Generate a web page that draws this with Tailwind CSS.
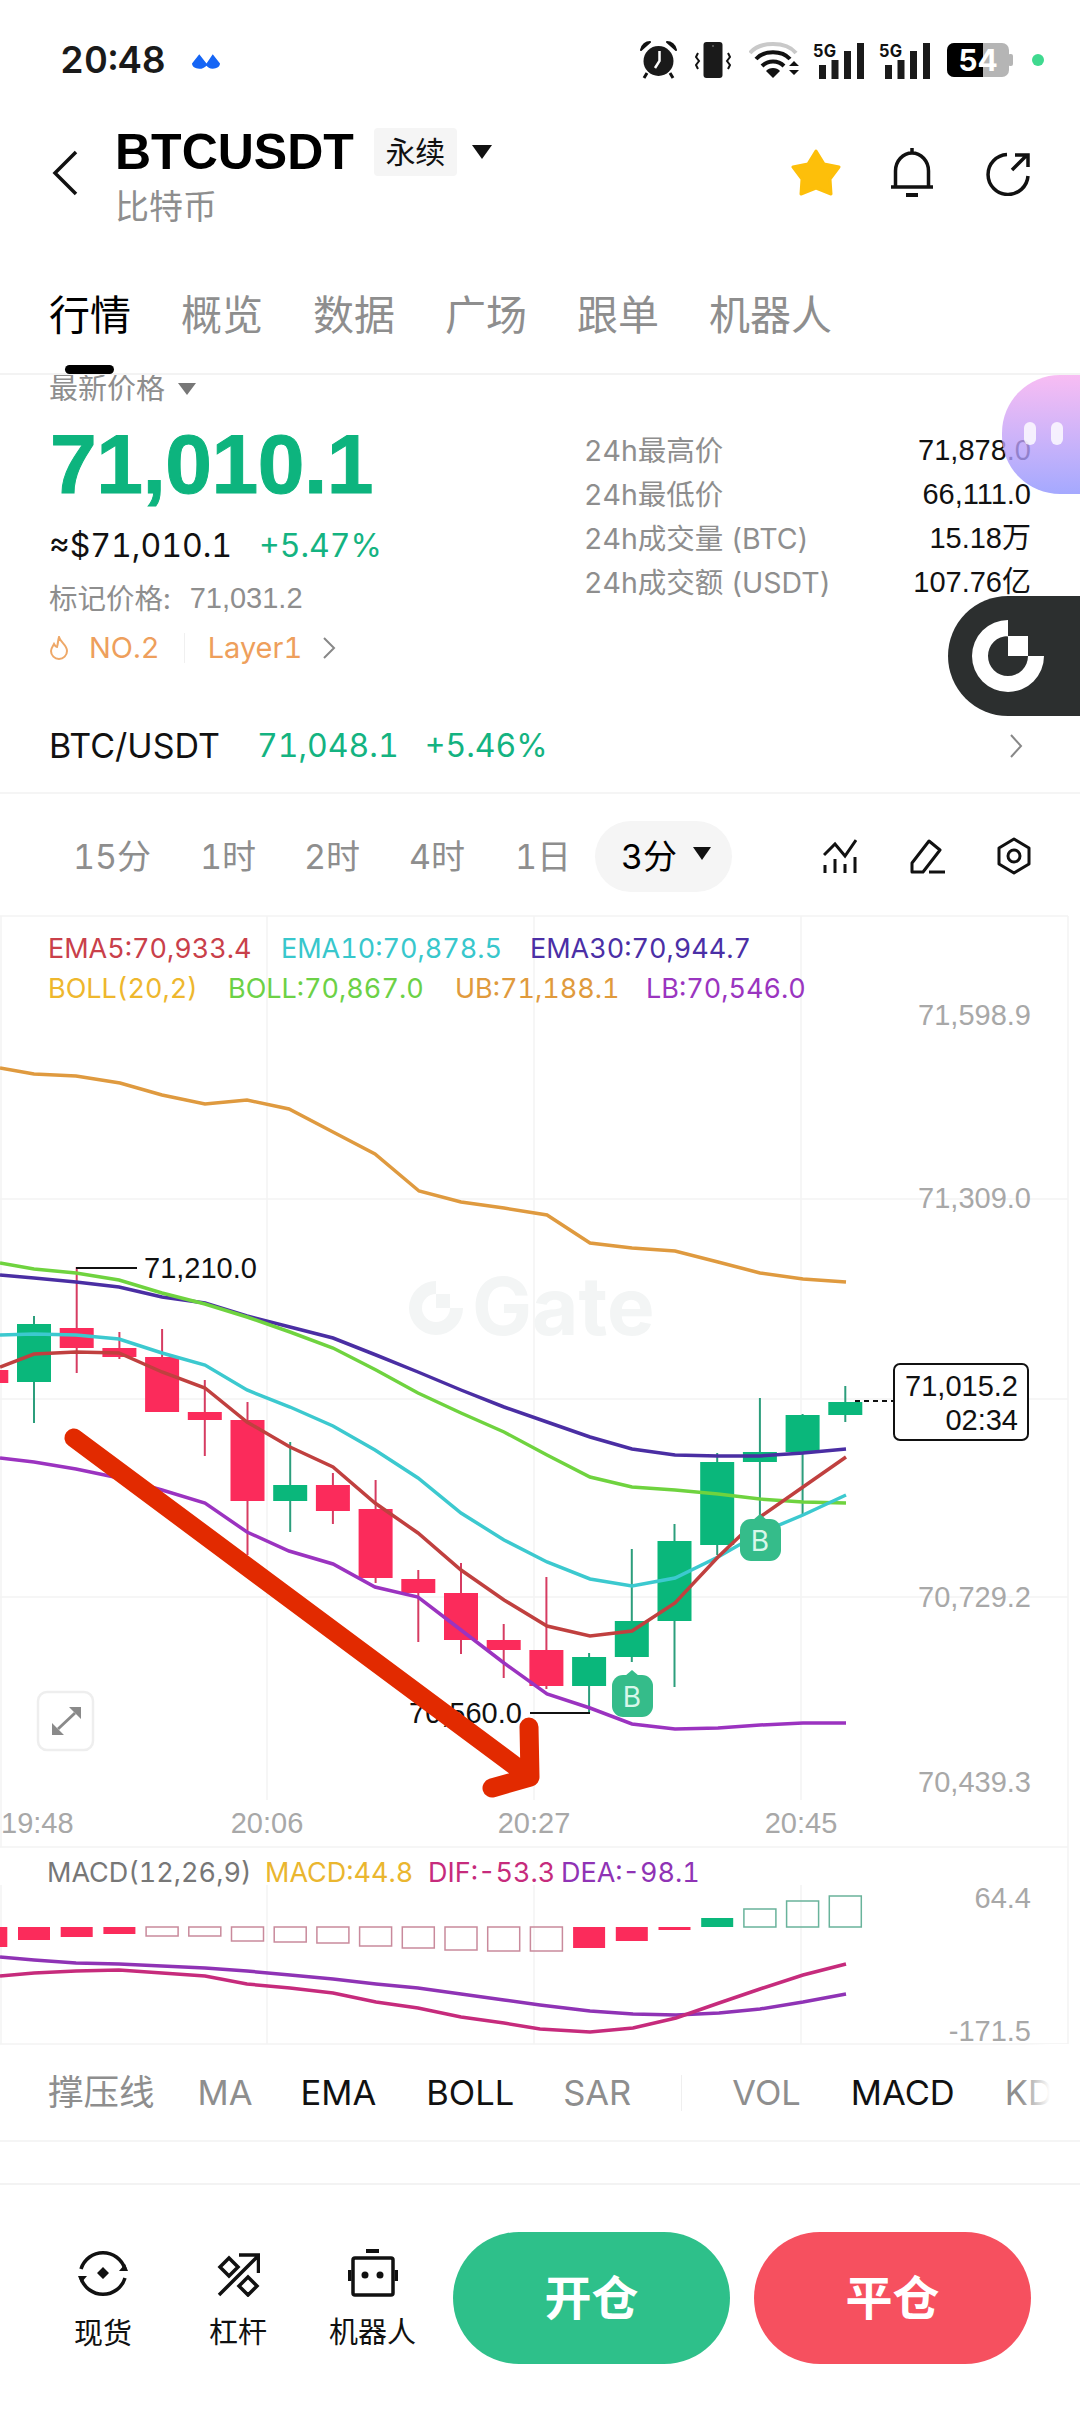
<!DOCTYPE html>
<html lang="zh-CN">
<head>
    <meta charset="UTF-8" />
    <meta name="viewport" content="width=device-width, initial-scale=1.0" />
    <title>BTCUSDT</title>
    <script src="https://cdn.jsdelivr.net/npm/@tailwindcss/browser@4"></script>
</head>
<body>
<div class="relative w-[1080px] h-[2412px] overflow-hidden bg-white text-[#111] tabular-nums [font-family:Inter,'Noto_Sans_CJK_SC',sans-serif]">

    <!-- Status bar -->
    <div class="relative h-[120px] flex items-center pl-[60px] pr-[36px]">
        <span class="text-[37px] font-semibold text-[#1a1a1a]">20:48</span>
        <svg class="ml-[26px] mt-[3px]" width="28" height="15" viewBox="0 0 27 14"><path d="M7 0 L14 9 L20 0 L27 9 C27 12 24 14 20 14 C17 14 15 12 14 11 C12 13 10 14 7 14 C3 14 0 12 0 9 Z" fill="#1565f5"/></svg>
        <div class="ml-auto flex items-center">
            <!-- alarm -->
            <svg width="37" height="38" viewBox="0 0 37 38"><path d="M1 9 C2 4 6 1 10 1 Z M36 9 C35 4 31 1 27 1 Z" fill="#111" stroke="#111" stroke-width="2" stroke-linejoin="round"/><circle cx="18.5" cy="20" r="15" fill="#1a1a1a"/><path d="M19.5 10 V20 L15 27" fill="none" stroke="#fff" stroke-width="2.5"/><path d="M7 32 L4 37 M30 32 L33 37" stroke="#111" stroke-width="3"/></svg>
            <!-- vibrate -->
            <svg class="ml-[18px]" width="36" height="36" viewBox="0 0 36 36"><rect x="8.5" y="0" width="19" height="36" rx="3" fill="#1a1a1a"/><circle cx="18" cy="4" r="1" fill="#666"/><path d="M3 11 L1 15 L4 19 L1 23 L3 27 M33 11 L35 15 L32 19 L35 23 L33 27" fill="none" stroke="#111" stroke-width="2"/></svg>
            <!-- wifi -->
            <svg class="ml-[18px]" width="50" height="36" viewBox="0 0 50 36"><path d="M1 11 C11 -1 37 -1 47 11" fill="none" stroke="#c9c9c9" stroke-width="4"/><path d="M7 17 C15 8 33 8 41 17" fill="none" stroke="#111" stroke-width="4"/><path d="M13 24 C19 18 29 18 35 24" fill="none" stroke="#111" stroke-width="4"/><path d="M17 29 C20 25 28 25 31 29 L24 36 Z" fill="#111"/><path d="M40 24 L45 19 L50 24 Z M40 28 L50 28 L45 33 Z" fill="#111"/></svg>
            <!-- signal 1 -->
            <svg class="ml-[14px] overflow-visible" width="51" height="37" viewBox="0 0 51 37"><text x="0" y="15" font-size="17" font-weight="700" textLength="23" lengthAdjust="spacingAndGlyphs" fill="#111">5G</text><rect x="6" y="23" width="7" height="14" fill="#1a1a1a"/><rect x="18.500" y="18" width="7" height="19" fill="#1a1a1a"/><rect x="31" y="9" width="7" height="28" fill="#1a1a1a"/><rect x="44" y="1" width="7" height="36" fill="#1a1a1a"/></svg>
            <!-- signal 2 -->
            <svg class="ml-[15px] overflow-visible" width="51" height="37" viewBox="0 0 51 37"><text x="0" y="15" font-size="17" font-weight="700" textLength="23" lengthAdjust="spacingAndGlyphs" fill="#111">5G</text><rect x="6" y="23" width="7" height="14" fill="#1a1a1a"/><rect x="18.500" y="18" width="7" height="19" fill="#1a1a1a"/><rect x="31" y="9" width="7" height="28" fill="#1a1a1a"/><rect x="44" y="1" width="7" height="36" fill="#1a1a1a"/></svg>
            <!-- battery -->
            <svg class="ml-[17px] overflow-visible" width="66" height="34" viewBox="0 0 66 34"><rect x="0" y="0" width="62" height="34" rx="7" fill="#b5b5b5"/><path d="M7 0 H36 V34 H7 A7 7 0 0 1 0 27 V7 A7 7 0 0 1 7 0 Z" fill="#000"/><rect x="61" y="11" width="5" height="12" rx="2" fill="#b5b5b5"/><text x="31" y="28" font-size="30" font-weight="700" text-anchor="middle" fill="#fff">54</text></svg>
            <div class="ml-[19px] w-[12px] h-[12px] rounded-full bg-[#3fd98f]"></div>
        </div>
    </div>

    <!-- Header -->
    <div class="h-[150px] flex pl-[52px] pr-[50px]">
        <svg class="mt-[30px]" width="26" height="46" viewBox="0 0 26 46"><path d="M24 2 L3 23 L24 44" fill="none" stroke="#111" stroke-width="3.500"/></svg>
        <div class="ml-[37px]">
            <div class="flex items-center h-[60px] mt-[2px]">
                <span class="text-[50px] font-bold leading-none text-black [font-family:'Liberation_Sans',sans-serif]">BTCUSDT</span>
                <span class="ml-[20px] w-[83px] h-[48px] flex items-center justify-center rounded-[4px] bg-[#f5f5f5] text-[30px] leading-none text-[#111]">永续</span>
                <svg class="ml-[15px] -mt-[1px]" width="20" height="14" viewBox="0 0 20 14"><path d="M0 0 H20 L10 14 Z" fill="#111"/></svg>
            </div>
            <div class="mt-[5px] text-[34px] leading-[40px] text-[#8e8e8e]">比特币</div>
        </div>
        <div class="ml-auto flex items-start">
            <svg class="mt-[29px]" width="50" height="47" viewBox="0 0 50 47"><path d="M25 2 L33 15 L48 18 L39 30 L40 45 L25 39 L10 45 L11 30 L2 18 L17 15 Z" fill="#fdbf0a" stroke="#fdbf0a" stroke-width="3" stroke-linejoin="round"/></svg>
            <svg class="ml-[50px] mt-[27px]" width="42" height="50" viewBox="0 0 42 50"><path d="M4.500 39 V24 A16.500 18 0 0 1 37.500 24 V39 M0 40 H42 M21 1 V6" fill="none" stroke="#111" stroke-width="3.500"/><rect x="15" y="46" width="12" height="4" fill="#111"/></svg>
            <svg class="ml-[53px] mt-[32px]" width="44" height="44" viewBox="0 0 44 44"><path d="M21 2.500 A20 20 0 1 0 42 24" fill="none" stroke="#111" stroke-width="3.500"/><path d="M26 18 L41 3 M29 3 H42 V15" fill="none" stroke="#111" stroke-width="3.500"/></svg>
        </div>
    </div>

    <!-- Tabs -->
    <div class="relative h-[105px] flex gap-[50px] pl-[49px] pt-[21px] text-[41px] leading-[48px] text-[#8e8e8e] border-b-2 border-[#f3f3f3]">
        <span class="text-black">行情</span>
        <span>概览</span>
        <span>数据</span>
        <span>广场</span>
        <span>跟单</span>
        <span>机器人</span>
        <div class="absolute left-[65px] top-[95px] w-[49px] h-[9px] rounded-full bg-black"></div>
    </div>

    <!-- Ticker stats -->
    <div class="h-[288px] flex justify-between pl-[49px] pr-[49px]">
        <div>
            <div class="h-[28px] flex items-center text-[29px] text-[#8e8e8e]">最新价格
                <svg class="ml-[13px]" width="18" height="12" viewBox="0 0 18 12"><path d="M0 0 H18 L9 12 Z" fill="#777"/></svg>
            </div>
            <div class="h-[124px] pb-[3px] pl-[1px] flex items-center text-[84px] font-bold tracking-[-0.500px] text-[#0db47e] [-webkit-text-stroke:1px_#0db47e] [font-family:'Liberation_Sans',sans-serif]">71,010.1</div>
            <div class="h-[38px] flex items-center text-[32px] text-[#111]">≈$71,010.1<span class="ml-[27px] text-[#14b381]">+5.47%</span></div>
            <div class="h-[68px] flex items-center text-[28.500px] text-[#8e8e8e]">标记价格:<span class="ml-[19px] text-[29px] [font-family:'Liberation_Sans',sans-serif]">71,031.2</span></div>
            <div class="h-[30px] flex items-center text-[29px] text-[#ee9f5c]">
                <svg width="20" height="24" viewBox="0 0 20 24"><path d="M10 1 C11 6 18 9 18 15 A8 8 0 0 1 2 15 C2 12 4 10 5 8 C6 10 7 11 8 11 C9 8 9 4 10 1 Z" fill="none" stroke="#eea868" stroke-width="2"/></svg>
                <span class="ml-[20px]">NO.2</span>
                <span class="ml-[24px] w-px h-[30px] bg-[#f0f0f0]"></span>
                <span class="ml-[23px]">Layer1</span>
                <svg class="ml-[20px]" width="14" height="22" viewBox="0 0 14 22"><path d="M2 1 L12 11 L2 21" fill="none" stroke="#888" stroke-width="2"/></svg>
            </div>
        </div>
        <div class="w-[447px] pt-[54px] flex flex-col text-[28.500px]">
            <div class="h-[44px] flex items-center justify-between"><span class="text-[#8e8e8e]">24h最高价</span><span class="text-[29px] [font-family:'Liberation_Sans','Noto_Sans_CJK_SC',sans-serif]">71,878.0</span></div>
            <div class="h-[44px] flex items-center justify-between"><span class="text-[#8e8e8e]">24h最低价</span><span class="text-[29px] [font-family:'Liberation_Sans','Noto_Sans_CJK_SC',sans-serif]">66,111.0</span></div>
            <div class="h-[44px] flex items-center justify-between"><span class="text-[#8e8e8e]">24h成交量 (BTC)</span><span class="text-[29px] [font-family:'Liberation_Sans','Noto_Sans_CJK_SC',sans-serif]">15.18万</span></div>
            <div class="h-[44px] flex items-center justify-between"><span class="text-[#8e8e8e]">24h成交额 (USDT)</span><span class="text-[29px] [font-family:'Liberation_Sans','Noto_Sans_CJK_SC',sans-serif]">107.76亿</span></div>
        </div>
    </div>

    <!-- Spot row -->
    <div class="h-[131px] flex items-center pl-[49px] pr-[57px] pt-[40px] pb-[4px] text-[32px] border-b-2 border-[#f5f5f5]">
        <span class="text-[34px]">BTC/USDT</span>
        <span class="ml-[37px] text-[#14b381]">71,048.1</span>
        <span class="ml-[26px] text-[#14b381]">+5.46%</span>
        <svg class="ml-auto" width="14" height="24" viewBox="0 0 14 24"><path d="M2 1 L12 12 L2 23" fill="none" stroke="#888" stroke-width="2"/></svg>
    </div>

    <!-- Interval row -->
    <div class="h-[121px] flex items-center pl-[73px] pr-[49px] pt-[3px] text-[34px] text-[#8e8e8e]">
        <span class="w-[127px]">15分</span>
        <span class="w-[104px]">1时</span>
        <span class="w-[105px]">2时</span>
        <span class="w-[106px]">4时</span>
        <span class="w-[80px]">1日</span>
        <div class="w-[137px] h-[71px] flex items-center pl-[26px] rounded-full bg-[#f5f5f5] text-black">3分
            <svg class="ml-[16px] -mt-[5px]" width="18" height="13" viewBox="0 0 18 13"><path d="M0 0 H18 L9 13 Z" fill="#111"/></svg>
        </div>
        <svg class="ml-auto" width="34" height="34" viewBox="0 0 34 34"><path d="M1 16 L12 5 L22 17 L33 1 M2 26 V34 M12 20 V34 M22 25 V34 M32 18 V34" fill="none" stroke="#111" stroke-width="3"/></svg>
        <svg class="ml-[52px]" width="36" height="35" viewBox="0 0 36 35"><path d="M3 24 L20 2 L31 11 L14 33 H3 Z" fill="none" stroke="#111" stroke-width="3" stroke-linejoin="round"/><path d="M20 33 H36" stroke="#111" stroke-width="3"/></svg>
        <svg class="ml-[52px]" width="34" height="38" viewBox="0 0 34 38"><path d="M17 2 L32 11 V27 L17 36 L2 27 V11 Z" fill="none" stroke="#111" stroke-width="3" stroke-linejoin="round"/><circle cx="17" cy="19" r="6" fill="none" stroke="#111" stroke-width="3"/></svg>
    </div>

    <!-- Chart (viewBox uses page coordinates) -->
    <div class="relative h-[1129px]">
        <svg class="absolute inset-0 overflow-visible" width="1080" height="1129" viewBox="0 915 1080 1129">
            <!-- grid -->
            <path d="M0 916 H1068 M0 1199 H1068 M0 1399 H1068 M0 1597 H1068 M0 1847 H1068 M0 2044 H1068 M1 916 V1847 M267 916 V1800 M534 916 V1800 M801 916 V1800 M1068 916 V2044 M1 1885 V2044 M267 1885 V2044 M534 1885 V2044 M801 1885 V2044" fill="none" stroke="#f4f4f4" stroke-width="1.500"/>
            <!-- watermark -->
            <path d="M436 1281 A27 27 0 1 0 463 1308 H450 A14 14 0 1 1 436 1294 Z M436 1294 H450 V1308 H436 Z" fill="#f3f5f5"/>
            <text x="472" y="1335" font-size="80" font-weight="700" fill="#f3f5f5">Gate</text>
            <g id="macdBars"></g>
            <g id="candles"></g>
            <!-- upper band -->
            <polyline fill="none" stroke="#df9a3f" stroke-width="3.500" points="0,1068 34,1074 76,1076 120,1083 162,1095 205,1104 247,1100 289,1109 333,1132 375,1154 419,1191 461,1202 504,1208 547,1215 590,1243 632,1248 675,1251 718,1262 760,1273 803,1279 846,1282"/>
            <!-- EMA30 -->
            <polyline fill="none" stroke="#4a2ea3" stroke-width="3.500" points="0,1275 34,1278 76,1282 119,1287 162,1297 205,1303 247,1316 290,1327 333,1338 376,1355 418,1372 461,1390 504,1407 547,1422 590,1437 632,1449 675,1455 718,1456 760,1456 803,1453 846,1449"/>
            <!-- BOLL mid -->
            <polyline fill="none" stroke="#6fd33f" stroke-width="3.500" points="0,1263 34,1269 76,1273 119,1280 162,1293 205,1304 247,1317 290,1332 333,1348 376,1370 418,1393 461,1413 504,1432 547,1455 590,1477 632,1487 675,1490 718,1494 760,1499 803,1502 846,1503"/>
            <!-- EMA10 -->
            <polyline fill="none" stroke="#3cc9cf" stroke-width="3.500" points="0,1335 34,1334 76,1335 119,1339 162,1353 205,1365 247,1390 290,1407 333,1426 375,1450 418,1478 461,1513 504,1540 547,1562 590,1579 632,1586 675,1578 718,1557 760,1533 803,1515 846,1495"/>
            <!-- EMA5 -->
            <polyline fill="none" stroke="#c0403f" stroke-width="3.500" points="0,1367 34,1354 76,1352 119,1353 162,1372 205,1388 247,1422 290,1447 333,1467 375,1503 418,1533 461,1570 504,1600 547,1626 590,1636 632,1631 675,1603 718,1557 760,1517 803,1487 846,1457"/>
            <!-- lower band -->
            <polyline fill="none" stroke="#9b33c0" stroke-width="3.500" points="0,1458 34,1462 76,1469 119,1478 162,1490 205,1503 247,1532 289,1551 333,1564 375,1587 418,1597 461,1630 504,1663 547,1694 590,1708 632,1724 675,1729 718,1728 760,1725 803,1723 846,1723"/>
            <!-- MACD lines -->
            <polyline fill="none" stroke="#8f33b5" stroke-width="3.500" points="0,1957 34,1960 76,1963 119,1964 162,1966 205,1968 247,1971 290,1975 333,1979 376,1984 418,1988 461,1994 504,2000 540,2005 590,2011 633,2014 676,2015 719,2013 760,2009 803,2002 846,1994"/>
            <polyline fill="none" stroke="#c62b7c" stroke-width="3.500" points="0,1976 34,1973 76,1971 119,1970 162,1973 205,1976 247,1984 290,1988 333,1993 376,2002 418,2008 461,2017 504,2023 540,2029 590,2032 633,2028 676,2018 719,2003 760,1989 803,1975 846,1964"/>

            <!-- legends -->
            <g font-size="27" dominant-baseline="central">
                <text x="48" y="948" fill="#c9404a">EMA5:70,933.4</text>
                <text x="281" y="948" fill="#38c7cc">EMA10:70,878.5</text>
                <text x="530" y="948" fill="#4b2fa6">EMA30:70,944.7</text>
                <text x="48" y="988" fill="#eeb72d">BOLL(20,2)</text>
                <text x="228" y="988" fill="#6cd146">BOLL:70,867.0</text>
                <text x="455" y="988" fill="#e09a3c">UB:71,188.1</text>
                <text x="646" y="988" fill="#9a35c0">LB:70,546.0</text>
                <text x="47" y="1872" fill="#777">MACD(12,26,9)</text>
                <text x="265" y="1872" fill="#eab62f">MACD:44.8</text>
                <text x="428" y="1872" fill="#c62b7c">DIF:-53.3</text>
                <text x="561" y="1872" fill="#8f33b5">DEA:-98.1</text>
            </g>
            <!-- axes -->
            <g font-size="29" font-family="'Liberation Sans', sans-serif" fill="#a8a8a8" dominant-baseline="central">
                <g text-anchor="end">
                    <text x="1031" y="1015">71,598.9</text>
                    <text x="1031" y="1198">71,309.0</text>
                    <text x="1031" y="1597">70,729.2</text>
                    <text x="1031" y="1782">70,439.3</text>
                    <text x="1031" y="1898">64.4</text>
                    <text x="1031" y="2031">-171.5</text>
                </g>
                <text x="1" y="1823">19:48</text>
                <text x="267" y="1823" text-anchor="middle">20:06</text>
                <text x="534" y="1823" text-anchor="middle">20:27</text>
                <text x="801" y="1823" text-anchor="middle">20:45</text>
            </g>
            <!-- high / low marks -->
            <path d="M76 1268 H137 M530 1713 H590" stroke="#111" stroke-width="2"/>
            <g font-size="29" font-family="'Liberation Sans', sans-serif" fill="#111" dominant-baseline="central">
                <text x="144" y="1268">71,210.0</text>
                <text x="409" y="1713">70,560.0</text>
            </g>
            <!-- current price -->
            <path d="M855 1401 H893" stroke="#111" stroke-width="2" stroke-dasharray="5 4"/>
            <rect x="894" y="1364" width="134" height="76" rx="6" fill="#fff" stroke="#111" stroke-width="2"/>
            <g font-size="29" font-family="'Liberation Sans', sans-serif" fill="#111" text-anchor="end" dominant-baseline="central">
                <text x="1018" y="1386">71,015.2</text>
                <text x="1018" y="1420">02:34</text>
            </g>
            <!-- buy marks -->
            <g fill="#35bc8a">
                <path d="M625 1676 L632 1670 L639 1676 Z"/><rect x="612" y="1675" width="41" height="42" rx="11"/>
                <path d="M753 1520 L760 1514 L767 1520 Z"/><rect x="740" y="1519" width="41" height="42" rx="11"/>
            </g>
            <g font-size="28" fill="#d8f7ea" text-anchor="middle" dominant-baseline="central">
                <text x="632" y="1697">B</text>
                <text x="760" y="1541">B</text>
            </g>
            <!-- fullscreen button -->
            <rect x="38" y="1692" width="55" height="58" rx="9" fill="#fff" stroke="#eeeeee" stroke-width="2.500"/>
            <path d="M58 1729 L75 1713" stroke="#8a8a8a" stroke-width="3"/>
            <path d="M69 1707 H81 V1719 Z M52 1723 V1735 H64 Z" fill="#8a8a8a"/>
            <!-- hand drawn arrow -->
            <path d="M74 1438 L530 1777 M529 1727 L530 1777 L492 1788" fill="none" stroke="#e22a00" stroke-width="19" stroke-linecap="round" stroke-linejoin="round"/>
        </svg>
    </div>

    <!-- Indicator tabs -->
    <div class="relative h-[98px] flex items-center pl-[48px] pt-[2px] text-[34.500px] text-[#8e8e8e] border-b-2 border-[#f5f5f5] overflow-hidden">
        <span class="text-[35.500px]">撑压线</span>
        <span class="ml-[43px]">MA</span>
        <span class="ml-[48px] text-[#111]">EMA</span>
        <span class="ml-[50px] text-[#111]">BOLL</span>
        <span class="ml-[49px]">SAR</span>
        <span class="ml-[50px] w-px h-[36px] bg-[#efefef]"></span>
        <span class="ml-[50px]">VOL</span>
        <span class="ml-[50px] text-[#111]">MACD</span>
        <span class="ml-[50px] whitespace-nowrap">KD</span>
        <div class="absolute left-[1020px] top-0 w-[60px] h-full bg-linear-to-r from-white/0 to-white to-50%"></div>
    </div>
    <div class="h-[43px] border-b-2 border-[#f3f3f3]"></div>

    <!-- Bottom actions -->
    <div class="h-[227px] flex items-start pl-[50px] pr-[49px] pt-[47px]">
        <div class="w-[106px] flex flex-col items-center">
            <svg class="mt-[16px]" width="50" height="50" viewBox="0 0 50 50"><path d="M3 21 A23 23 0 0 1 47 21 M47 30 A23 23 0 0 1 3 30" fill="none" stroke="#111" stroke-width="3.500"/><path d="M41 23 H50 L47 16 Z M0 28 H9 L3 35 Z M25 19 L31 25 L25 31 L19 25 Z" fill="#111"/></svg>
            <span class="mt-[22px] text-[29px] leading-[28px]">现货</span>
        </div>
        <div class="ml-[53px] w-[58px] flex flex-col items-center">
            <svg class="mt-[21px]" width="43" height="44" viewBox="0 0 43 44"><path d="M2 42 L41 3 M22 2 H41.500 V20" fill="none" stroke="#111" stroke-width="3.500"/><path d="M12 5 L21 14 L12 23 L3 14 Z M31 24 L40 33 L31 42 L22 33 Z" fill="none" stroke="#111" stroke-width="3.500"/></svg>
            <span class="mt-[22px] text-[29px] leading-[28px]">杠杆</span>
        </div>
        <div class="ml-[62px] w-[87px] flex flex-col items-center">
            <svg class="mt-[17px]" width="50" height="48" viewBox="0 0 50 48"><rect x="18" y="0" width="13" height="4" fill="#111"/><rect x="5" y="9" width="40" height="37" rx="2" fill="none" stroke="#111" stroke-width="3.500"/><rect x="0" y="21" width="3.500" height="11" fill="#111"/><rect x="46.500" y="21" width="3.500" height="11" fill="#111"/><circle cx="17" cy="26" r="3.500" fill="#111"/><circle cx="32" cy="26" r="3.500" fill="#111"/></svg>
            <span class="mt-[22px] text-[29px] leading-[28px]">机器人</span>
        </div>
        <div class="ml-[37px] w-[277px] h-[132px] flex items-center justify-center rounded-full bg-[#2ec08a] text-[47px] font-bold text-white">开仓</div>
        <div class="ml-[24px] w-[277px] h-[132px] flex items-center justify-center rounded-full bg-[#f6505f] text-[47px] font-bold text-white">平仓</div>
    </div>

    <!-- Floating widgets -->
    <div class="absolute left-[1002px] top-[375px] w-[78px] h-[119px] rounded-l-[58px] bg-linear-to-b from-[#f6acf0]/80 to-[#8e93fe]/80">
        <div class="absolute left-[22px] top-[47px] w-[12px] h-[23px] rounded-full bg-white/80"></div>
        <div class="absolute left-[49px] top-[47px] w-[12px] h-[23px] rounded-full bg-white/80"></div>
    </div>
    <div class="absolute left-[948px] top-[596px] w-[132px] h-[120px] rounded-l-[60px] bg-[#2c2f2f]">
        <svg class="absolute left-[24px] top-[24px]" width="72" height="72" viewBox="0 0 72 72"><path d="M36 0 A36 36 0 1 0 72 36 H56 A20 20 0 1 1 36 16 Z M36 16 H56 V36 H36 Z" fill="#fff"/></svg>
    </div>
</div>

<script>
    // x position of each candle comes from its index
    const candleX = i => 34 + 42.7 * i;
    const red = '#fb2b5b', green = '#0ab77b';

    // [body top, body bottom, wick top, wick bottom, up?]
    const candles = [
        [1370,1383,1370,1383,0],[1324,1382,1316,1423,1],[1328,1348,1267,1373,0],[1348,1357,1332,1359,0],
        [1357,1412,1329,1412,0],[1412,1420,1380,1456,0],[1420,1501,1402,1555,0],[1485,1501,1442,1532,1],
        [1485,1511,1473,1524,0],[1509,1578,1480,1583,0],[1579,1593,1570,1642,0],[1593,1640,1563,1654,0],
        [1640,1650,1624,1678,0],[1650,1686,1577,1689,0],[1657,1686,1653,1713,1],[1621,1657,1549,1662,1],
        [1541,1621,1524,1687,1],[1462,1545,1453,1555,1],[1452,1462,1398,1515,1],[1415,1452,1414,1515,1],
        [1402,1415,1386,1422,1]
    ];
    let candleSvg = '';
    candles.forEach((c, n) => {
        const x = candleX(n - 1);
        candleSvg += `<path d="M${x} ${c[2]} V${c[3]}" stroke="${c[4] ? '#2c9e7c' : '#d63c62'}" stroke-width="2"/>`;
        candleSvg += `<rect x="${x - 17}" y="${c[0]}" width="34" height="${c[1] - c[0]}" fill="${c[4] ? green : red}"/>`;
    });
    document.getElementById('candles').innerHTML = candleSvg;

    // [top, bottom, style] 0 solid red, 1 hollow red, 2 solid green, 3 hollow green
    const bars = [
        [1927,1947,0],[1927,1940,0],[1927,1937,0],[1927,1934,0],[1927,1936,1],[1927,1936,1],[1927,1941,1],
        [1927,1942,1],[1927,1943,1],[1927,1946,1],[1927,1948,1],[1927,1950,1],[1927,1951,1],[1927,1951,1],
        [1927,1948,0],[1927,1941,0],[1927,1930,0],[1918,1927,2],[1909,1927,3],[1901,1927,3],[1896,1927,3]
    ];
    let barSvg = '';
    bars.forEach((b, n) => {
        const x = candleX(n - 1) - 16;
        const h = b[1] - b[0];
        if (b[2] === 0) barSvg += `<rect x="${x}" y="${b[0]}" width="32" height="${h}" fill="${red}"/>`;
        if (b[2] === 1) barSvg += `<rect x="${x}" y="${b[0]}" width="32" height="${h}" fill="none" stroke="#c98a9c" stroke-width="1.500"/>`;
        if (b[2] === 2) barSvg += `<rect x="${x}" y="${b[0]}" width="32" height="${h}" fill="${green}"/>`;
        if (b[2] === 3) barSvg += `<rect x="${x}" y="${b[0]}" width="32" height="${h}" fill="none" stroke="#69b39b" stroke-width="1.500"/>`;
    });
    document.getElementById('macdBars').innerHTML = barSvg;
</script>
</body>
</html>
